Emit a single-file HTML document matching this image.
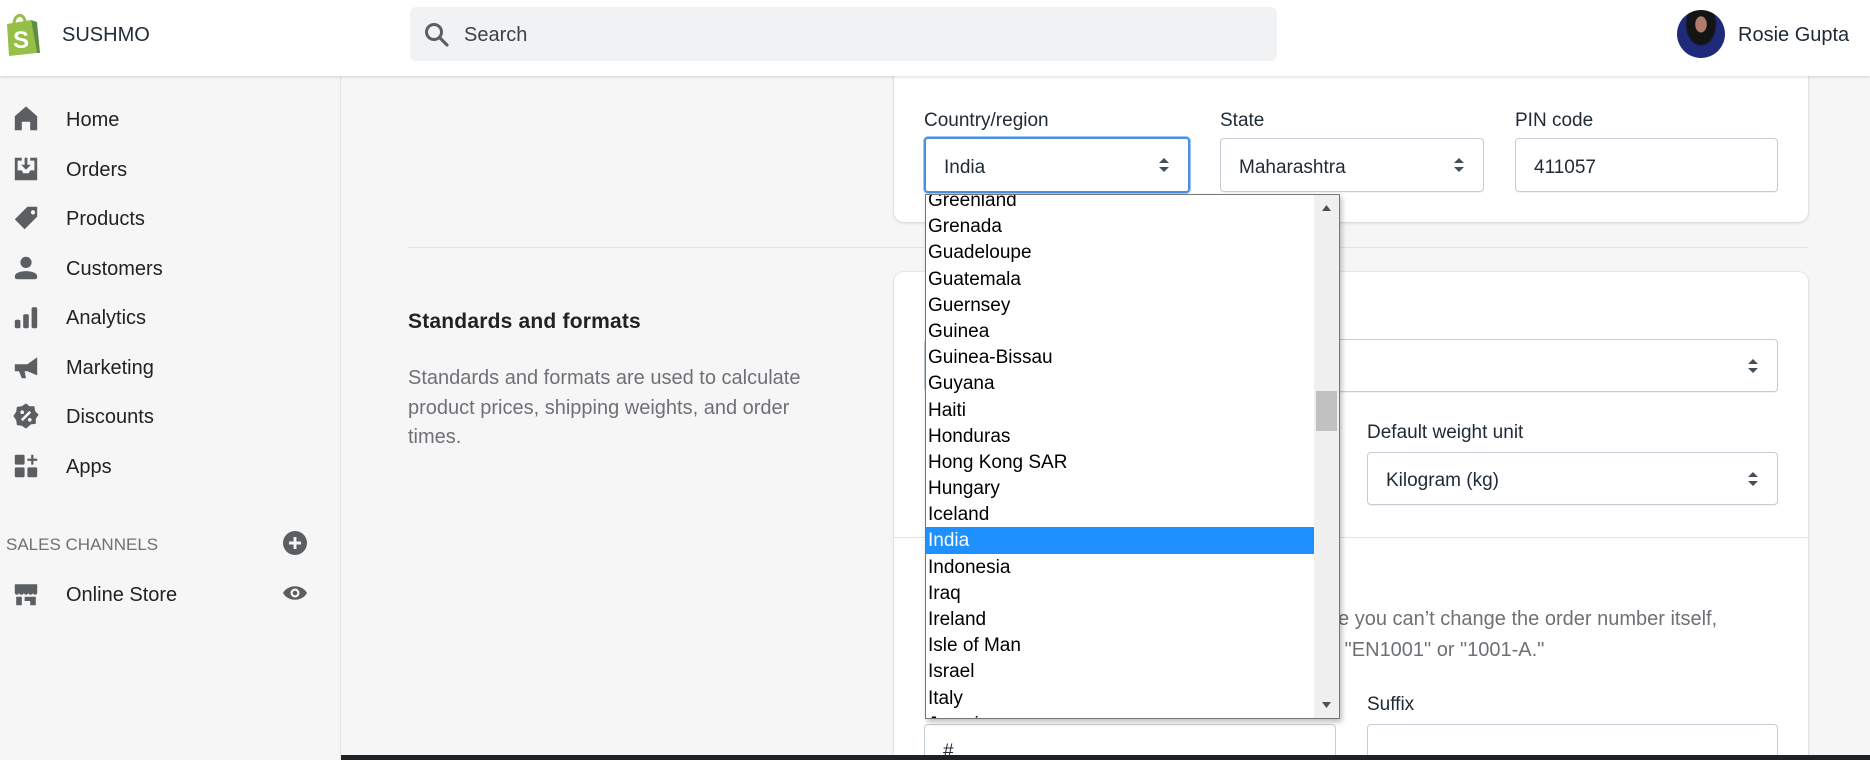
<!DOCTYPE html>
<html><head><meta charset="utf-8">
<style>
*{box-sizing:border-box;margin:0;padding:0}
html,body{width:1870px;height:760px;overflow:hidden}
body{background:#f6f6f7;font-family:"Liberation Sans",sans-serif;color:#212b36;position:relative}
.abs{position:absolute}
#hdr{left:0;top:0;width:1870px;height:76px;background:#fff;box-shadow:0 1px 3px rgba(0,0,0,.15);z-index:5}
#side{left:0;top:76px;width:341px;height:684px;background:#f6f6f7;border-right:1px solid #e1e3e5}
.nav{position:absolute;left:0;height:40px;display:flex;align-items:center;font-size:20px;color:#202223;white-space:nowrap}
.nav svg{position:absolute;left:12px;width:28px;height:28px;fill:#5c5f62}
.nav span{position:absolute;left:66px;top:10px}
.card{background:#fff;border-radius:10px;box-shadow:0 0 0 1px rgba(63,63,68,.05),0 1px 3px rgba(63,63,68,.15)}
.lbl{font-size:19px;color:#212b36}
.inp{border:1px solid #c4cdd5;border-radius:4px;background:#fff;font-size:19px;display:flex;align-items:center;padding-left:18px;padding-top:5px;box-shadow:0 1px 0 rgba(22,29,37,.05)}
.arr{position:absolute;right:18px;top:50%;margin-top:-10px;width:12px;height:20px}
#dd{left:925px;top:194px;width:415px;height:525px;background:#fff;border:1px solid #767676;box-shadow:2px 3px 5px rgba(0,0,0,.25);overflow:hidden;z-index:10;font-family:"Liberation Sans",Arial,sans-serif}
#dd .it{height:26.2px;line-height:28px;font-size:19px;color:#000;padding-left:2px;width:389px}
#dd .sel{background:#1e90ff;color:#fff}
</style></head><body>

<div id="hdr" class="abs">
  <svg class="abs" style="left:4px;top:12px" width="38" height="44" viewBox="0 0 38 44">
    <path d="M3 12 L27 8 L33 41 L5 44 Z" fill="#95bf47"/>
    <path d="M27 8 L33 10 L36 41 L33 41 Z" fill="#5e8e3e"/>
    <path d="M10 12 C10 2 20 0 21 10" stroke="#95bf47" stroke-width="3" fill="none"/>
    <text x="9" y="36" font-family="Liberation Sans" font-weight="bold" font-size="24" fill="#fff">S</text>
  </svg>
  <div class="abs" style="left:62px;top:24px;font-size:20px;color:#212b36">SUSHMO</div>
  <div class="abs" style="left:410px;top:7px;width:867px;height:54px;background:#f1f2f3;border-radius:6px">
    <svg class="abs" style="left:14px;top:15px" width="26" height="26" viewBox="0 0 26 26"><circle cx="10" cy="10" r="7.5" stroke="#5c5f62" stroke-width="3" fill="none"/><path d="M15.5 15.5 L23 23" stroke="#5c5f62" stroke-width="3.2" stroke-linecap="round"/></svg>
    <div class="abs" style="left:54px;top:17px;font-size:20px;color:#3d4145">Search</div>
  </div>
  <div class="abs" style="left:1677px;top:10px;width:48px;height:48px;border-radius:50%;background:radial-gradient(ellipse at 50% 30%,#b07c6c 0 16%,#141414 18% 42%,#1f2a7a 46% 100%)"></div>
  <div class="abs" style="left:1738px;top:24px;font-size:20px;color:#212b36">Rosie Gupta</div>
</div>

<div id="side" class="abs">
  <div class="nav" style="top:23px"><svg viewBox="0 0 20 20"><path d="M10 1 L18 8 V18 H13 V12 H7 V18 H2 V8 Z"/></svg><span>Home</span></div>
  <div class="nav" style="top:73px"><svg viewBox="0 0 20 20"><path d="M2 2 H7 V4 H4 V11 H7 L8 13 H12 L13 11 H16 V4 H13 V2 H18 V18 H2 Z M9 2 H11 V7 H13.5 L10 10.5 L6.5 7 H9 Z"/></svg><span>Orders</span></div>
  <div class="nav" style="top:122px"><svg viewBox="0 0 20 20"><path d="M11 2 H18 V9 L9 18 L2 11 Z M15 4.5 A1.5 1.5 0 1 0 15 7.5 A1.5 1.5 0 1 0 15 4.5Z" fill-rule="evenodd"/></svg><span>Products</span></div>
  <div class="nav" style="top:172px"><svg viewBox="0 0 20 20"><circle cx="10" cy="6" r="4"/><path d="M2 16 C2 11 18 11 18 16 C18 18 17 18 16 18 H4 C3 18 2 18 2 16Z"/></svg><span>Customers</span></div>
  <div class="nav" style="top:221px"><svg viewBox="0 0 20 20"><rect x="2" y="12" width="4" height="6" rx="1"/><rect x="8" y="8" width="4" height="10" rx="1"/><rect x="14" y="3" width="4" height="15" rx="1"/></svg><span>Analytics</span></div>
  <div class="nav" style="top:271px"><svg viewBox="0 0 20 20"><path d="M18 3 V16 L11 13 H9 L10 18 H7 L5 13 H2 V8 H11 Z"/></svg><span>Marketing</span></div>
  <div class="nav" style="top:320px"><svg viewBox="0 0 20 20"><path d="M10 1 L12.5 3 L16 3 L16.5 6.5 L19 9 L17 12 L17 15.5 L13.5 16 L10 19 L7 17 L3.5 16.5 L3 13 L1 10 L3 7 L3.5 3.5 L7 3 Z"/><path d="M7 13 L13 7" stroke="#f6f6f7" stroke-width="1.8"/><circle cx="7.3" cy="7.3" r="1.3" fill="#f6f6f7"/><circle cx="12.7" cy="12.7" r="1.3" fill="#f6f6f7"/></svg><span>Discounts</span></div>
  <div class="nav" style="top:370px"><svg viewBox="0 0 20 20"><rect x="2" y="2" width="7" height="7" rx="1"/><rect x="2" y="11" width="7" height="7" rx="1"/><rect x="11" y="11" width="7" height="7" rx="1"/><path d="M13.7 2 H15.3 V4.7 H18 V6.3 H15.3 V9 H13.7 V6.3 H11 V4.7 H13.7Z"/></svg><span>Apps</span></div>
  <div class="abs" style="left:6px;top:459px;font-size:17px;color:#6d7175">SALES CHANNELS</div>
  <svg class="abs" style="left:283px;top:455px" width="24" height="24" viewBox="0 0 20 20"><circle cx="10" cy="10" r="10" fill="#5c5f62"/><path d="M10 5 V15 M5 10 H15" stroke="#f6f6f7" stroke-width="2.4"/></svg>
  <div class="nav" style="top:498px"><svg viewBox="0 0 20 20"><path d="M2 3 H18 V9 C18 11 15 11 15 9 C15 11 11.5 11 11.5 9 C11.5 11 8.5 11 8.5 9 C8.5 11 5 11 5 9 C5 11 2 11 2 9 Z M3 12 H7 V18 H3Z M9 12 H17 V18 H13 V15 H9 Z"/></svg><span>Online Store</span></div>
  <svg class="abs" style="left:282px;top:507px" width="26" height="20" viewBox="0 0 26 20"><path d="M1 10 C6 1 20 1 25 10 C20 19 6 19 1 10Z" fill="#5c5f62"/><circle cx="13" cy="10" r="4.5" fill="#f6f6f7"/><circle cx="13" cy="10" r="2.3" fill="#5c5f62"/></svg>
</div>

<!-- card 1 -->
<div class="abs card" style="left:894px;top:40px;width:914px;height:182px"></div>
<div class="abs" style="left:924px;top:40px;width:854px;height:36px;border:1px solid #c4cdd5;border-top:none;border-radius:0 0 4px 4px;background:#fff"></div>
<div class="abs lbl" style="left:924px;top:110px">Country/region</div>
<div class="abs lbl" style="left:1220px;top:110px">State</div>
<div class="abs lbl" style="left:1515px;top:110px">PIN code</div>
<div class="abs inp" style="left:924px;top:137px;width:266px;height:56px;border:2px solid #4a90e2;box-shadow:0 0 0 1px #9fc6f5">India<svg class="arr" viewBox="0 0 12 20"><path d="M6 3 L11 8 H1Z M6 17 L11 12 H1Z" fill="#454f5b"/></svg></div>
<div class="abs inp" style="left:1220px;top:138px;width:264px;height:54px">Maharashtra<svg class="arr" viewBox="0 0 12 20"><path d="M6 3 L11 8 H1Z M6 17 L11 12 H1Z" fill="#454f5b"/></svg></div>
<div class="abs inp" style="left:1515px;top:138px;width:263px;height:54px">411057</div>

<div class="abs" style="left:408px;top:247px;width:1400px;height:1px;background:#dfe3e8"></div>

<div class="abs" style="left:408px;top:310px;font-size:21px;font-weight:bold;color:#202223;letter-spacing:0.2px">Standards and formats</div>
<div class="abs" style="left:408px;top:364px;font-size:20px;line-height:29.5px;color:#6d7175;white-space:nowrap">Standards and formats are used to calculate<br>product prices, shipping weights, and order<br>times.</div>

<!-- card 2 -->
<div class="abs card" style="left:894px;top:272px;width:914px;height:500px"></div>
<div class="abs inp" style="left:924px;top:339px;width:854px;height:53px"><svg class="arr" viewBox="0 0 12 20"><path d="M6 3 L11 8 H1Z M6 17 L11 12 H1Z" fill="#454f5b"/></svg></div>
<div class="abs lbl" style="left:1367px;top:422px">Default weight unit</div>
<div class="abs inp" style="left:1367px;top:452px;width:411px;height:53px">Kilogram (kg)<svg class="arr" viewBox="0 0 12 20"><path d="M6 3 L11 8 H1Z M6 17 L11 12 H1Z" fill="#454f5b"/></svg></div>
<div class="abs" style="left:894px;top:537px;width:914px;height:1px;background:#dfe3e8"></div>
<div class="abs" style="left:1318px;top:608px;font-size:20px;color:#6d7175;white-space:nowrap">hile you can’t change the order number itself,</div>
<div class="abs" style="left:1318px;top:639px;font-size:20px;color:#6d7175;white-space:nowrap">ke "EN1001" or "1001-A."</div>
<div class="abs lbl" style="left:1367px;top:694px">Suffix</div>
<div class="abs inp" style="left:924px;top:724px;width:412px;height:60px;align-items:flex-start;padding-top:16px">#</div>
<div class="abs inp" style="left:1367px;top:724px;width:411px;height:60px"></div>

<div class="abs" style="left:341px;top:755px;width:1529px;height:5px;background:#202123;z-index:20"></div>

<!-- dropdown -->
<div id="dd" class="abs">
  <div style="position:absolute;top:-8px;left:0">
    <div class="it">Greenland</div><div class="it">Grenada</div><div class="it">Guadeloupe</div><div class="it">Guatemala</div><div class="it">Guernsey</div><div class="it">Guinea</div><div class="it">Guinea-Bissau</div><div class="it">Guyana</div><div class="it">Haiti</div><div class="it">Honduras</div><div class="it">Hong Kong SAR</div><div class="it">Hungary</div><div class="it">Iceland</div><div class="it sel">India</div><div class="it">Indonesia</div><div class="it">Iraq</div><div class="it">Ireland</div><div class="it">Isle of Man</div><div class="it">Israel</div><div class="it">Italy</div><div class="it">Jamaica</div>
  </div>
  <div style="position:absolute;right:0;top:0;width:25px;height:100%;background:#f0f0f0">
    <svg style="position:absolute;left:7px;top:9px" width="11" height="8" viewBox="0 0 11 8"><path d="M5.5 1 L10 7 H1Z" fill="#505050"/></svg>
    <div style="position:absolute;left:2px;top:196px;width:21px;height:40px;background:#c1c1c1"></div>
    <svg style="position:absolute;left:7px;bottom:9px" width="11" height="8" viewBox="0 0 11 8"><path d="M5.5 7 L10 1 H1Z" fill="#505050"/></svg>
  </div>
</div>
</body></html>
